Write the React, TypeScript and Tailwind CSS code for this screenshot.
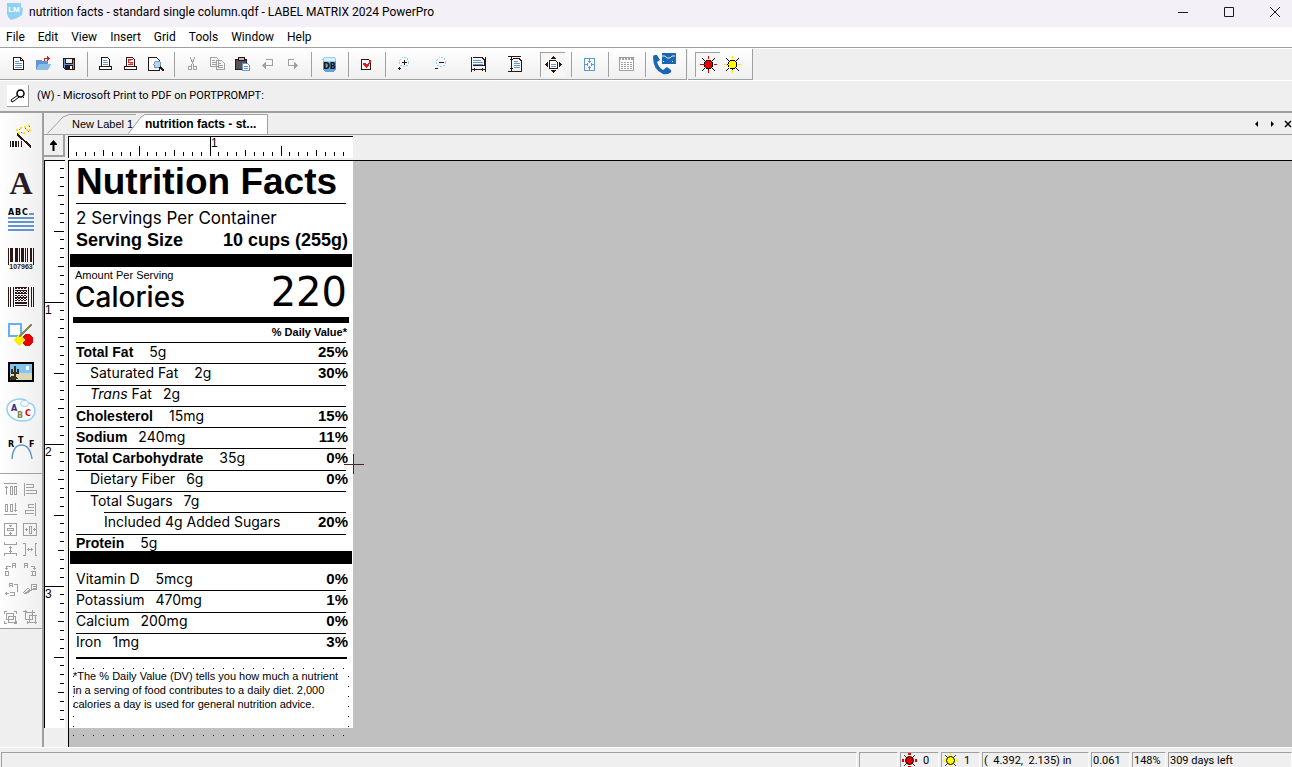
import { ReactNode } from "react";
import clsx from "clsx";

const INK = "#2a1616";
const BLUE = "#6396cf";
const SKY = "#8fd0f5";
const DIM = "#a0a0a0";

type IconProps = { children: ReactNode; size?: 17 | 30 | 16 };

const sizes = {
  16: "w-4 h-4",
  17: "w-[17px] h-[17px]",
  30: "w-[30px] h-[30px]",
};

const Icon = ({ children, size = 17 }: IconProps) => (
  <svg
    className={clsx("shrink-0", sizes[size])}
    viewBox={`0 0 ${size} ${size}`}
    fill="none"
    shapeRendering="crispEdges"
    aria-hidden="true"
  >
    {children}
  </svg>
);

const Sun = ({ fill, rays }: { fill: string; rays: string }) => (
  <Icon>
    <path d="M2 2l3 3M15 2l-3 3M2 15l3-3M15 15l-3-3" stroke="#000" />
    <path d="M8.5 0v3M8.5 14v3M0 8.5h3M14 8.5h3" stroke={rays} />
    <circle cx="8.5" cy="8.5" r="4.5" fill={fill} stroke="#000" />
  </Icon>
);

const StatusSun = ({ fill }: { fill: string }) => (
  <svg className="w-[15px] h-[15px] shrink-0" viewBox="0 0 15 15" fill="none" aria-hidden="true">
    <path d="M2 2l2 2M13 2l-2 2M2 13l2-2M13 13l-2-2" stroke="#333" />
    <path d="M6 0h3v2H6zM6 13h3v2H6zM0 6h2v3H0zM13 6h2v3h-2z" fill={fill} />
    <circle cx="7.5" cy="7.5" r="4" fill={fill} stroke="#000" />
  </svg>
);

const Magnifier = ({ plus }: { plus?: boolean }) => (
  <Icon>
    <circle cx="9" cy="6" r="4.5" stroke={SKY} strokeDasharray="2 1" />
    <path d="M7 6.5h5" stroke={INK} />
    {plus && <path d="M9.5 4v5" stroke={INK} />}
    <path d="M3 12.5h3" stroke={INK} />
    {plus && <path d="M4.5 11v3" stroke={INK} />}
  </Icon>
);

const icons = {
  fresh: (
    <Icon>
      <path d="M3.5 1.5h7l3 3v9h-10z M10.5 1.5v3h3" stroke={INK} fill="#fff" />
      <path d="M5 5.5h4M5 7.5h7M5 9.5h7M5 11.5h7" stroke={BLUE} />
    </Icon>
  ),
  open: (
    <Icon>
      <path d="M1 4h5l1 1h6v3h3l-3 6H1z" fill={BLUE} />
      <path d="M4 8h12l-3 6H1z" fill="#8abfe8" />
      <path d="M9 4.5v-2h4" stroke="#d22" />
      <path d="M12 0l3 2.5L12 5z" fill="#d22" />
    </Icon>
  ),
  save: (
    <Icon>
      <path d="M3 2h12v12H5l-2-2z" fill={INK} />
      <path d="M6 3h6v4H6z" fill="#e8f0f8" />
      <path d="M4 3h1v9H4zM13 4h1v9h-1zM5 8h8v1H5z" fill={BLUE} />
      <path d="M10 10h2v3h-2z" fill="#fff" />
    </Icon>
  ),
  print: (
    <Icon>
      <path d="M2.5 10.5h12v3h-12z" fill="#fff" stroke={INK} />
      <path d="M4.5 1.5h6l2 2v7h-8z" fill="#fff" stroke={INK} />
      <path d="M6 4.5h4M6 6.5h5M6 8.5h5" stroke={BLUE} />
      <path d="M2 13h13v1H2z" fill={INK} />
    </Icon>
  ),
  printSelection: (
    <Icon>
      <path d="M2.5 10.5h12v3h-12z" fill="#fff" stroke={INK} />
      <path d="M4.5 1.5h6l2 2v7h-8z" fill="#fff" stroke={INK} />
      <path d="M11 3.5H6.5v2.5H10.5v2.5H6" stroke="#d22" />
      <path d="M7 4.5h2M8 7.5h3" stroke="#e77" />
      <path d="M2 13h13v1H2z" fill={INK} />
    </Icon>
  ),
  preview: (
    <Icon>
      <path d="M1.5 1.5h8l3 3v10h-11z" fill="#fff" stroke={INK} />
      <circle cx="10.5" cy="8.5" r="3.5" fill="#b8d4ee" stroke={BLUE} />
      <path d="M13 11l4 4" stroke={INK} strokeWidth="2" />
    </Icon>
  ),
  cut: (
    <Icon>
      <path d="M6 1l4 9M11 1L7 10" stroke={DIM} />
      <circle cx="6" cy="12" r="2" stroke={DIM} />
      <circle cx="11" cy="12" r="2" stroke={DIM} />
    </Icon>
  ),
  copy: (
    <Icon>
      <path d="M1.5 1.5h6l2 2v7h-8zM7.5 4.5h5l3 3v6h-8z" fill="#f6f6f6" stroke={DIM} />
      <path d="M3 4.5h3M3 6.5h4M3 8.5h4M9 7.5h3M9 9.5h5M9 11.5h5" stroke={DIM} />
    </Icon>
  ),
  paste: (
    <Icon>
      <path d="M1 3h12v11H1z" fill="#5a5254" />
      <path d="M1.5 3.5h11v10h-11z" stroke={INK} />
      <path d="M4 1h6v3H4z" fill="#bbb" stroke={INK} />
      <path d="M8.5 7.5h5l2 2v5h-7z" fill="#fff" stroke={BLUE} />
      <path d="M10 10.5h4M10 12.5h4" stroke={BLUE} />
    </Icon>
  ),
  undo: (
    <Icon>
      <path d="M7 3.5h6v6H5" stroke={DIM} />
      <path d="M3 9.5L7 6v7z" fill={DIM} />
    </Icon>
  ),
  redo: (
    <Icon>
      <path d="M10 3.5H4v6h8" stroke={DIM} />
      <path d="M14 9.5L10 6v7z" fill={DIM} />
    </Icon>
  ),
  database: (
    <Icon>
      <path d="M2 3v11l3 2h7l3-2V3z" fill="#5fa3dc" />
      <ellipse cx="8.5" cy="3.5" rx="6.5" ry="2.5" fill="#d8eefb" stroke={SKY} />
      <text x="8.5" y="13" textAnchor="middle" fontSize="8" fontWeight="700" fontFamily="DejaVu Sans" fill="#111">
        DB
      </text>
    </Icon>
  ),
  check: (
    <Icon>
      <path d="M3.5 3.5h7l2 2v8h-9z" fill="#fff" stroke={INK} />
      <path d="M5 7h2l2 2 4-6v3L9 12H8L5 9z" fill="#e02020" />
    </Icon>
  ),
  zoomIn: <Magnifier plus />,
  zoomOut: <Magnifier />,
  fitWidth: (
    <Icon>
      <path d="M3 1.5h9l2 2v6H3" stroke={INK} />
      <path d="M1.5 1v15M15.5 1v15" stroke={INK} />
      <path d="M3 4.5h8M3 6.5h10M3 8.5h10" stroke={BLUE} />
      <path d="M2 13.5h13M4.5 12v3M12.5 12v3" stroke={INK} />
    </Icon>
  ),
  fitHeight: (
    <Icon>
      <path d="M1 .5h13M1 15.5h14" stroke={INK} />
      <path d="M6 2.5h6l2.5 2.5v10" stroke={INK} />
      <path d="M7 5.5h4M7 7.5h6M7 9.5h6M7 11.5h6" stroke={BLUE} />
      <path d="M4.5 1v14M3 3.5h3M3 12.5h3" stroke={INK} />
    </Icon>
  ),
  fitPage: (
    <Icon>
      <path d="M4.5 4.5h6l2 2v6h-8z" fill="#fff" stroke={INK} />
      <path d="M6 8.5h5M6 10.5h5" stroke={BLUE} />
      <path d="M6 3l2.5-3L11 3zM6 14l2.5 3 2.5-3zM3 6L0 8.5 3 11zM14 6l3 2.5-3 2.5z" fill={INK} />
    </Icon>
  ),
  center: (
    <Icon>
      <path d="M3.5 2.5h10v12h-10z" fill="#f4f9fd" stroke={BLUE} />
      <path d="M8.5 3v4M8.5 10v4M4 8.5h3M10 8.5h3" stroke={BLUE} />
      <path d="M7 5.5h3M7 11.5h3M6.5 7v3M10.5 7v3" stroke={BLUE} />
    </Icon>
  ),
  grid: (
    <Icon>
      <path d="M1.5 1.5h14v13h-14z" fill="#fff" stroke={DIM} />
      <path d="M1 3h15" stroke={DIM} strokeWidth="2" strokeDasharray="2 1" />
      <path d="M3 6.5h11M3 8.5h11M3 10.5h11M3 12.5h11" stroke={DIM} strokeDasharray="2 1" />
    </Icon>
  ),
  red: <Sun fill="#e60000" rays="#e60000" />,
  yellow: <Sun fill="#ffff00" rays="#f0f000" />,
};

const Contact = () => (
  <svg className="w-6 h-[23px] shrink-0" viewBox="0 0 24 23" fill="none" aria-hidden="true">
    <path d="M1 4q0-2 2-2h2l3 5-3 2q2 6 6 8l4-3 4 3q1 2-1 3-3 2-7 1Q1 17 1 4z" fill="#1c67b4" />
    <path d="M10 0h14v11H10z" fill="#1c67b4" />
    <path d="M10 3h3l2 2h3l2-2h3M11 8.5h1M20 8.5h1" stroke="#dfeaf5" />
  </svg>
);

const bars = [8, 10, 12, 15, 16, 19, 21, 22, 25, 27, 30, 31, 33];

const sideTools: { label: string; icon: ReactNode }[] = [
  {
    label: "Text",
    icon: <span className="font-['Liberation_Serif',serif] font-bold text-[32px] leading-none text-[#2a1a26]">A</span>,
  },
  {
    label: "Paragraph",
    icon: (
      <Icon size={30}>
        <g fontSize="8" fontWeight="700" fontFamily="DejaVu Sans" fill="#000">
          <text x="2" y="9">A</text>
          <text x="9" y="9">B</text>
          <text x="16" y="9">C</text>
        </g>
        <path d="M23 8h5M2 12h26M2 16h26M2 20h26M2 24h26" stroke={BLUE} strokeWidth="2" />
      </Icon>
    ),
  },
  {
    label: "Barcode",
    icon: (
      <Icon size={30}>
        {bars.map((x, i) => (
          <path key={x} d={`M${x - 5.5} 4v${i === 0 || i === 12 ? 17 : 14}`} stroke={INK} strokeWidth={i % 3 === 1 ? 2 : 1} />
        ))}
        <text x="15" y="25" textAnchor="middle" fontSize="7" fontWeight="700" fontFamily="Liberation Sans" fill={INK}>
          107963
        </text>
      </Icon>
    ),
  },
  {
    label: "2D barcode",
    icon: (
      <Icon size={30}>
        <path d="M2.5 5v20M4.5 5v20M7.5 5v20M22.5 5v20M25.5 5v20M27.5 5v20" stroke={INK} />
        <path d="M10 5v20M13 5v20M16 5v20M19 5v20" stroke={INK} strokeWidth="2" strokeDasharray="2 1 1 1" />
        <path d="M11.5 5v20M14.5 5v20M17.5 5v20M20.5 5v20" stroke={INK} strokeDasharray="1 2 2 1" />
      </Icon>
    ),
  },
  {
    label: "Shapes",
    icon: (
      <Icon size={30}>
        <path d="M3 4h12v12H3z" stroke="#64b0f4" strokeWidth="2" fill="#fff" />
        <circle cx="21.5" cy="20" r="6" fill="#e60000" />
        <path d="M13 14l6 6-6 6-6-6z" fill="#ffee00" />
        <path d="M25.5 4.5L13 17" stroke="#8a8a58" strokeWidth="2" />
      </Icon>
    ),
  },
  {
    label: "Picture",
    icon: (
      <Icon size={30}>
        <path d="M2 4h26v20H2z" fill="#000" />
        <path d="M4 6h22v10H4z" fill="#7fc6f4" />
        <path d="M4 15h22v7H4z" fill="#d8d4c4" />
        <path d="M11 16.5h15M12 18.5h14M11 20.5h14" stroke="#efe36a" strokeDasharray="1 2" />
        <circle cx="21.5" cy="10" r="2" fill="#fff" />
        <path d="M9 8v14M6 11v4h3M12 11v4H9" stroke="#3a3020" strokeWidth="2" />
        <path d="M4 22l8-1-3-4-5 2z" fill="#3a3020" />
      </Icon>
    ),
  },
  {
    label: "Art text",
    icon: (
      <Icon size={30}>
        <path
          d="M20 4C9 1 1 6 1 13s7 12 16 12 12-6 12-10-1-7-6-8"
          fill="#fff"
          stroke={SKY}
          strokeWidth="1.5"
          shapeRendering="auto"
        />
        <ellipse cx="18.5" cy="7.5" rx="4" ry="3" stroke={SKY} shapeRendering="auto" />
        <g fontSize="8" fontWeight="700" fontFamily="DejaVu Sans">
          <text x="5" y="15" fill="#2b2b8c">A</text>
          <text x="11" y="22" fill="#7d8a50">B</text>
          <text x="19" y="20" fill="#d00">C</text>
        </g>
      </Icon>
    ),
  },
  {
    label: "Rich text",
    icon: (
      <Icon size={30}>
        <path d="M6 25Q7 11 15.5 11T26 25" stroke={BLUE} strokeWidth="1.5" shapeRendering="auto" />
        <g fontSize="8" fontWeight="700" fontFamily="DejaVu Sans" fill="#000">
          <text x="2" y="13">R</text>
          <text x="12" y="9">T</text>
          <text x="23" y="13">F</text>
        </g>
      </Icon>
    ),
  },
];

const wizard = (
  <Icon size={30}>
    <path d="M4.5 20v6M12.5 20v6M15.5 20v6" stroke={INK} />
    <path d="M6 20h2v6H6zM9 20h2v6H9z" fill={INK} />
    <path d="M11 13l14 13" stroke={INK} strokeWidth="2" />
    <path d="M10 9h3M14 7h3M18 6h3M22 5h3M12 12h3M17 12h3M20 9h5" stroke="#ffe400" strokeWidth="2" strokeDasharray="2 1" />
    <path d="M13 8.5h1M19 7.5h1M15 11.5h1M22 10.5h1M23 5.5h1" stroke="#d33" />
  </Icon>
);

const alignTools = [
  { label: "Align top", d: "M2 2.5h13M4.5 5v9M3 6.5h3M8.5 5.5h2v8h-2zM12.5 5.5h2v8h-2z" },
  { label: "Align left", d: "M2.5 2v13M4 3.5h7v3h-7M4 9.5h10v3h-10" },
  { label: "Align bottom", d: "M2 13.5h13M3.5 3.5h2v7h-2zM8.5 3.5h2v7h-2zM13.5 2v9M12 9.5h3" },
  { label: "Align right", d: "M13.5 2v13M12 3.5h-6v3h6M12 9.5h-9v3h9" },
  { label: "Center vertically", d: "M2.5 2.5h12v12h-12zM8.5 4v2M7 4.5h3M5.5 7.5h6v2h-6zM8.5 11v3M7 12.5h3" },
  { label: "Center horizontally", d: "M1.5 2.5h13v12h-13zM3 8.5h3M4.5 7v3M7.5 5v7h2v-7zM11 8.5h3M12.5 7v3" },
  { label: "Space vertically", d: "M2.5 1v2.5h12V1M2.5 15v-2.5h12V15M8.5 5v7M7 6.5h3M7 10.5h3" },
  { label: "Space horizontally", d: "M1 2.5h2v12h-2M15 2.5h-2v12h2M5 8.5h6M6.5 7v3M9.5 7v3" },
  { label: "Rotate left", d: "M4.5 9v-4h4M3 7.5h3M10.5 7v-5h3v5M10 4.5h4M7 10.5h-4v4h4M6.5 10v5" },
  { label: "Rotate right", d: "M12.5 9v-4h-4M11 7.5h3M2.5 7v-5h3v5M2 4.5h4M9 10.5h4v4h-4M10.5 10v5" },
  { label: "Flip", d: "M7.5 6v-4h3v4M7 4.5h4M12 3.5h3v7M8 11.5h4v3h-4M3 12.5h4M4.5 11v3" },
  { label: "Format painter", d: "M1 12l5-5 3 3 3-3M2 13l6-4M4 13l4-3M9.5 3.5h5v5h-5zM11 5.5h3M11 7.5h3" },
];

const groupTools = [
  { label: "Group", d: "M4.5 4.5h7v6h-7zM6.5 7.5h7v6h-7zM2 2.5h3M2.5 2v3M12 14.5h3M14.5 12v3M12 2.5h3M14.5 2v3M2.5 12v3M2 14.5h3" },
  { label: "Ungroup", d: "M3.5 3.5h7v7h-7zM7.5 6.5h6v7h-6zM1 2.5h4M3.5 1v4M12 13.5h3M13.5 12v3M10.5 1v4M9 3.5h4M5.5 12v3M5 13.5h4M13 6.5h2" },
];

type Tool = keyof typeof icons;

const ToolButton = ({ label, pressed, children }: { label: string; pressed?: boolean; children: ReactNode }) => (
  <button
    aria-label={label}
    className={clsx(
      "w-[25px] h-[25px] shrink-0 flex items-center justify-center",
      pressed && "border-l border-t border-[#a0a0a0] bg-[#f6f6f6]"
    )}
  >
    {children}
  </button>
);

const Tools = ({ names }: { names: Tool[] }) => (
  <>
    {names.map((name) => (
      <ToolButton key={name} label={name} pressed={name === "fitPage" || name === "red"}>
        {icons[name]}
      </ToolButton>
    ))}
  </>
);

const Separator = () => (
  <div className="w-3 shrink-0 flex justify-center">
    <div className="w-px h-[25px] bg-[#a0a0a0]" />
  </div>
);

const menus = ["File", "Edit", "View", "Insert", "Grid", "Tools", "Window", "Help"];

const PX_PER_INCH = 142;

// sixteenth-inch ticks, longer on quarters and halves
const Ruler = ({ length, vertical }: { length: number; vertical?: boolean }) => {
  const count = Math.floor((length - 4) / (PX_PER_INCH / 16));
  return (
    <svg
      className="block"
      width={vertical ? 20 : length}
      height={vertical ? length : 20}
      shapeRendering="crispEdges"
      aria-hidden="true"
    >
      {Array.from({ length: count }, (_, i) => i + 1).map((n) => {
        const at = Math.floor((n * PX_PER_INCH) / 16) - 0.5;
        const size = n % 16 === 0 ? 19 : n % 8 === 0 ? 10 : n % 4 === 0 ? 6 : 4;
        return vertical ? (
          <path key={n} d={`M${19 - size} ${at}h${size}`} stroke="#000" />
        ) : (
          <path key={n} d={`M${at} ${19 - size}v${size}`} stroke="#000" />
        );
      })}
      {Array.from({ length: Math.floor(count / 16) }, (_, i) => i + 1).map((inch) => (
        <text
          key={inch}
          x={vertical ? 0 : inch * PX_PER_INCH}
          y={vertical ? inch * PX_PER_INCH + 11 : 10}
          fontSize="12"
          fontFamily="Liberation Sans"
        >
          {inch}
        </text>
      ))}
    </svg>
  );
};

type Nutrient = {
  name: ReactNode;
  amount?: string;
  percent?: string;
  indent?: boolean;
  deep?: boolean;
  bold?: boolean;
  wide?: boolean;
};

const nutrients: Nutrient[] = [
  { name: "Total Fat", amount: "5g", percent: "25%", bold: true, wide: true },
  { name: "Saturated Fat", amount: "2g", percent: "30%", indent: true, wide: true },
  { name: <><i>Trans</i> Fat</>, amount: "2g", indent: true },
  { name: "Cholesterol", amount: "15mg", percent: "15%", bold: true, wide: true },
  { name: "Sodium", amount: "240mg", percent: "11%", bold: true },
  { name: "Total Carbohydrate", amount: "35g", percent: "0%", bold: true, wide: true },
  { name: "Dietary Fiber", amount: "6g", percent: "0%", indent: true },
  { name: "Total Sugars", amount: "7g", indent: true },
  { name: "Included 4g Added Sugars", percent: "20%", deep: true },
  { name: "Protein", amount: "5g", bold: true, wide: true },
];

const vitamins: Nutrient[] = [
  { name: "Vitamin D", amount: "5mcg", percent: "0%", wide: true },
  { name: "Potassium", amount: "470mg", percent: "1%" },
  { name: "Calcium", amount: "200mg", percent: "0%" },
  { name: "Iron", amount: "1mg", percent: "3%" },
];

const NutrientRow = ({ row, line }: { row: Nutrient; line: boolean }) => (
  <div className={clsx("relative flex items-center pr-[5px] pb-[2px]", row.deep ? "pl-[35px]" : row.indent ? "pl-[21px]" : "pl-[7px]")}>
    {line && <div className={clsx("absolute top-0 right-[7px] h-px bg-black", row.deep ? "left-[35px]" : "left-[7px]")} />}
    <div className={clsx("flex-1 flex items-baseline", row.wide ? "gap-4" : "gap-[11px]")}>
      <span className={clsx(row.bold && "font-['Liberation_Sans',sans-serif] font-bold")}>{row.name}</span>
      {row.amount && <span>{row.amount}</span>}
    </div>
    {row.percent && (
      <span className="font-['Liberation_Sans',sans-serif] font-bold text-[15px]">{row.percent}</span>
    )}
  </div>
);

const Label = () => (
  <article className="w-[284px] h-[567px] bg-white text-black font-['Inter',sans-serif] text-sm leading-4 whitespace-nowrap flex flex-col">
    <h1 className="h-[43px] shrink-0 mx-[7px] border-b border-black font-['Liberation_Sans',sans-serif] text-[37px] leading-[42px] font-bold">
      Nutrition Facts
    </h1>
    <div className="h-[50px] shrink-0 pl-[7px] pr-[5px] pt-[3px] text-[17px] leading-[22px]">
      <p>2 Servings Per Container</p>
      <p className="flex justify-between font-['Liberation_Sans',sans-serif] font-bold text-lg leading-[22px]">
        <span>Serving Size</span>
        <span>10 cups (255g)</span>
      </p>
    </div>
    <div className="h-[13px] shrink-0 mx-px bg-black" />
    <div className="h-[50px] shrink-0 flex justify-between px-[6px]">
      <div>
        <p className="font-['Liberation_Sans',sans-serif] text-[11px]">Amount Per Serving</p>
        <p className="text-[28px] leading-7 font-medium">Calories</p>
      </div>
      <p className="font-['DejaVu_Sans',sans-serif] text-[40px] leading-[50px]">220</p>
    </div>
    <div className="h-[6px] shrink-0 mx-1 bg-black" />
    <p className="h-[19px] shrink-0 pr-[6px] text-right font-['Liberation_Sans',sans-serif] font-bold text-[11px] leading-[18px]">
      % Daily Value*
    </p>
    <div className="h-[209px] shrink-0">
      <div className="h-[213px] grid auto-rows-fr">
        {nutrients.map((row, i) => (
          <NutrientRow key={i} row={row} line />
        ))}
      </div>
    </div>
    <div className="relative h-[13px] shrink-0 mx-px bg-black" />
    <div className="h-[85px] shrink-0 mt-[5px] grid auto-rows-fr">
      {vitamins.map((row, i) => (
        <NutrientRow key={i} row={row} line={i > 0} />
      ))}
    </div>
    <div className="h-[2px] shrink-0 mt-[3px] ml-[7px] mr-[6px] bg-black" />
    <div className="relative h-[70px] shrink-0 mt-2 mx-1 pt-0.5 font-['Liberation_Sans',sans-serif] text-[11px] leading-[14px]">
      <svg className="absolute inset-0 w-full h-full" shapeRendering="crispEdges" fill="none" stroke="#000" aria-hidden="true">
        <path d="M0 1.5H277M0 68.5H277" strokeDasharray="1 9" />
        <path d="M.5 9V68M275.5 9V68" strokeDasharray="1 9" />
      </svg>
      <p>
        *The % Daily Value (DV) tells you how much a nutrient
        <br />
        in a serving of food contributes to a daily diet. 2,000
        <br />
        calories a day is used for general nutrition advice.
      </p>
    </div>
  </article>
);

const Tab = ({ title, active }: { title: string; active?: boolean }) => (
  <button
    role="tab"
    aria-selected={!!active}
    className={clsx(
      "relative h-5 flex items-end leading-[19px]",
      active ? "w-[140px] -ml-2 pl-[17px] font-bold text-xs" : "w-[89px] pl-[25px]"
    )}
  >
    <svg className="absolute inset-0 w-full h-full" fill="none" aria-hidden="true">
      {active ? (
        <path d="M.5 19.5L13 3L17 .5H139.5V20" fill="#fff" stroke="#a0a0a0" />
      ) : (
        <path d="M.5 19.5L16 3L22 .5H89" stroke="#a0a0a0" />
      )}
    </svg>
    <span className="relative whitespace-nowrap font-['Liberation_Sans',sans-serif]">{title}</span>
  </button>
);

const StatusCell = ({ className, children }: { className?: string; children?: ReactNode }) => (
  <div
    className={clsx(
      "h-full flex items-center border-l border-t border-[#a0a0a0] border-r border-r-white pl-px whitespace-pre",
      className
    )}
  >
    {children}
  </div>
);

const Lines = ({ d }: { d: string }) => (
  <svg className="w-3 h-3" viewBox="0 0 12 12" fill="none" stroke="#1a1a1a" aria-hidden="true">
    <path d={d} />
  </svg>
);

const TitleBar = () => (
  <header className="h-[27px] shrink-0 flex items-center bg-[#f4f0f8] pl-[6px] pb-1">
    <svg className="w-[17px] h-[17px] mr-[6px]" viewBox="0 0 17 17" aria-hidden="true">
      <path d="M1 0h14v4l2 1-1 7-5 3-6 2-3-3-1-3z" fill={SKY} />
      <text x="8" y="9" textAnchor="middle" fontSize="8" fontWeight="700" fontFamily="Liberation Sans" fill="#fff">
        LM
      </text>
    </svg>
    <h2 className="flex-1 font-['Roboto',sans-serif] text-xs">
      nutrition facts - standard single column.qdf - LABEL MATRIX 2024 PowerPro
    </h2>
    <div className="flex items-center gap-[34px] pr-[11px]">
      <button aria-label="Minimize" className="w-3 h-3">
        <Lines d="M1 6.5h10" />
      </button>
      <button aria-label="Maximize" className="w-3 h-3">
        <Lines d="M1.5 1.5h9v9h-9z" />
      </button>
      <button aria-label="Close" className="w-3 h-3">
        <Lines d="M1 1l10 10M11 1L1 11" />
      </button>
    </div>
  </header>
);

const toolbar = "flex items-center border-r border-b border-[#a0a0a0] bg-linear-to-b from-white to-[#efefef]";

export default function App() {
  return (
    <div className="h-screen flex flex-col overflow-hidden bg-[#efefef] text-black font-['Roboto',sans-serif] text-[11px]">
      <TitleBar />

      <nav className="h-[21px] shrink-0 flex items-center gap-[13px] bg-white pl-[6px] border-b border-[#a0a0a0] text-xs">
        {menus.map((menu) => (
          <button key={menu} className="leading-4">
            {menu}
          </button>
        ))}
      </nav>

      <div className="h-[33px] shrink-0 flex border-t border-white border-b border-b-white">
        <div className={clsx(toolbar, "pl-[6px] pr-[10px]")}>
          <Tools names={["fresh", "open", "save"]} />
          <Separator />
          <Tools names={["print", "printSelection", "preview"]} />
          <Separator />
          <Tools names={["cut", "copy", "paste", "undo", "redo"]} />
          <Separator />
          <Tools names={["database"]} />
          <Separator />
          <Tools names={["check"]} />
          <Separator />
          <div className="w-[174px] flex justify-between">
            <Tools names={["zoomIn", "zoomOut", "fitWidth", "fitHeight", "fitPage"]} />
          </div>
          <Separator />
          <Tools names={["center"]} />
          <Separator />
          <Tools names={["grid"]} />
          <Separator />
          <ToolButton label="Contact">
            <Contact />
          </ToolButton>
        </div>
        <div className={clsx(toolbar, "ml-px px-[7px]")}>
          <Tools names={["red", "yellow"]} />
        </div>
      </div>

      <div className="h-[30px] shrink-0 flex items-center gap-2 pl-[7px]">
        <button aria-label="Select printer" className="w-[22px] h-[22px] flex items-center justify-center bg-white border-r border-b border-[#a0a0a0]">
          <Icon size={16}>
            <circle cx="10.5" cy="5.5" r="3.5" stroke="#000" strokeWidth="1.5" shapeRendering="auto" />
            <path d="M8 7l-7 5 1 2 2-1 5-4M12 2l2 2M12 8l2 2" stroke="#000" shapeRendering="auto" />
          </Icon>
        </button>
        <span>(W) - Microsoft Print to PDF on PORTPROMPT:</span>
      </div>

      <div className="flex-1 min-h-0 flex border-t-2 border-[#a0a0a0]">
        <aside className="w-[42px] shrink-0">
          <div className="h-[361px] flex flex-col pt-1 border-b border-[#a0a0a0] bg-linear-to-r from-white to-[#efefef]">
            <button aria-label="Wizard" className="h-[38px] mb-[9px] flex items-center justify-center">
              {wizard}
            </button>
            {sideTools.map((tool) => (
              <button key={tool.label} aria-label={tool.label} className="h-[38px] flex items-center justify-center">
                {tool.icon}
              </button>
            ))}
          </div>
          <div className="pt-[5px] pb-px border-b border-[#a0a0a0] bg-linear-to-r from-white to-[#efefef]">
            <div className="grid grid-cols-2 w-10">
              {alignTools.map((tool) => (
                <button key={tool.label} aria-label={tool.label} className="h-5 flex items-center justify-center">
                  <Icon size={16}>
                    <path d={tool.d} stroke={DIM} />
                  </Icon>
                </button>
              ))}
            </div>
            <div className="grid grid-cols-2 w-10 mt-2">
              {groupTools.map((tool) => (
                <button key={tool.label} aria-label={tool.label} className="h-5 flex items-center justify-center">
                  <Icon size={16}>
                    <path d={tool.d} stroke={DIM} />
                  </Icon>
                </button>
              ))}
            </div>
          </div>
        </aside>

        <main className="flex-1 min-w-0 flex flex-col border-l-2 border-[#a0a0a0]">
          <div className="h-[22px] shrink-0 flex items-end justify-between border-b border-[#a0a0a0] pl-[3px]">
            <div role="tablist" className="flex">
              <Tab title="New Label 1" />
              <Tab title="nutrition facts - st..." active />
            </div>
            <div className="flex items-center gap-[9px] h-full">
              <button aria-label="Previous tab">
                <svg className="w-[6px] h-[6px]" viewBox="0 0 6 6"><path d="M4 0v6L1 3z" /></svg>
              </button>
              <button aria-label="Next tab">
                <svg className="w-[6px] h-[6px]" viewBox="0 0 6 6"><path d="M2 0v6l3-3z" /></svg>
              </button>
              <button aria-label="Close tab">
                <svg className="w-2 h-2" viewBox="0 0 8 8"><path d="M1 1l6 6M7 1L1 7" stroke="#000" strokeWidth="1.5" /></svg>
              </button>
            </div>
          </div>

          <div className="h-[25px] shrink-0 flex items-start">
            <button
              aria-label="Reset origin"
              className="w-[21px] h-[22px] mr-[3px] flex items-center justify-center border-r-2 border-b-2 border-[#a0a0a0]"
            >
              <svg className="w-[7px] h-[11px]" viewBox="0 0 7 11"><path d="M3.5 0L7 4v1H4.5v6h-2V5H0V4z" /></svg>
            </button>
            <div className="mt-px w-[285px] h-[22px] bg-white border-l border-t border-black">
              <Ruler length={284} />
            </div>
          </div>

          <div className="flex-1 min-h-0 flex">
            <div className="w-[21px] shrink-0 self-start bg-white border-l border-t border-black">
              <Ruler length={567} vertical />
            </div>
            <div className="ml-[3px] flex-1 relative border-l border-t border-black bg-[#c0c0c0]">
              <Label />
              <svg className="absolute left-[275px] top-[293px] w-5 h-5" viewBox="0 0 20 20" fill="none" shapeRendering="crispEdges" aria-hidden="true">
                <path d="M0 10.5h20M9.5 0v20" stroke="#4a2a20" />
              </svg>
            </div>
          </div>
        </main>
      </div>

      <footer className="h-5 shrink-0 flex gap-0.5 pt-1 pl-px border-t border-white leading-none">
        <StatusCell className="flex-1" />
        <StatusCell className="w-[39px]" />
        <StatusCell className="w-[39px] gap-[6px]">
          <StatusSun fill="#e60000" />
          <span>0</span>
        </StatusCell>
        <StatusCell className="w-[39px] gap-[6px]">
          <StatusSun fill="#ffff00" />
          <span>1</span>
        </StatusCell>
        <StatusCell className="w-[107px]">(  4.392,  2.135) in</StatusCell>
        <StatusCell className="w-[39px]">0.061</StatusCell>
        <StatusCell className="w-[34px]">148%</StatusCell>
        <StatusCell className="w-[124px]">309 days left</StatusCell>
      </footer>
    </div>
  );
}
